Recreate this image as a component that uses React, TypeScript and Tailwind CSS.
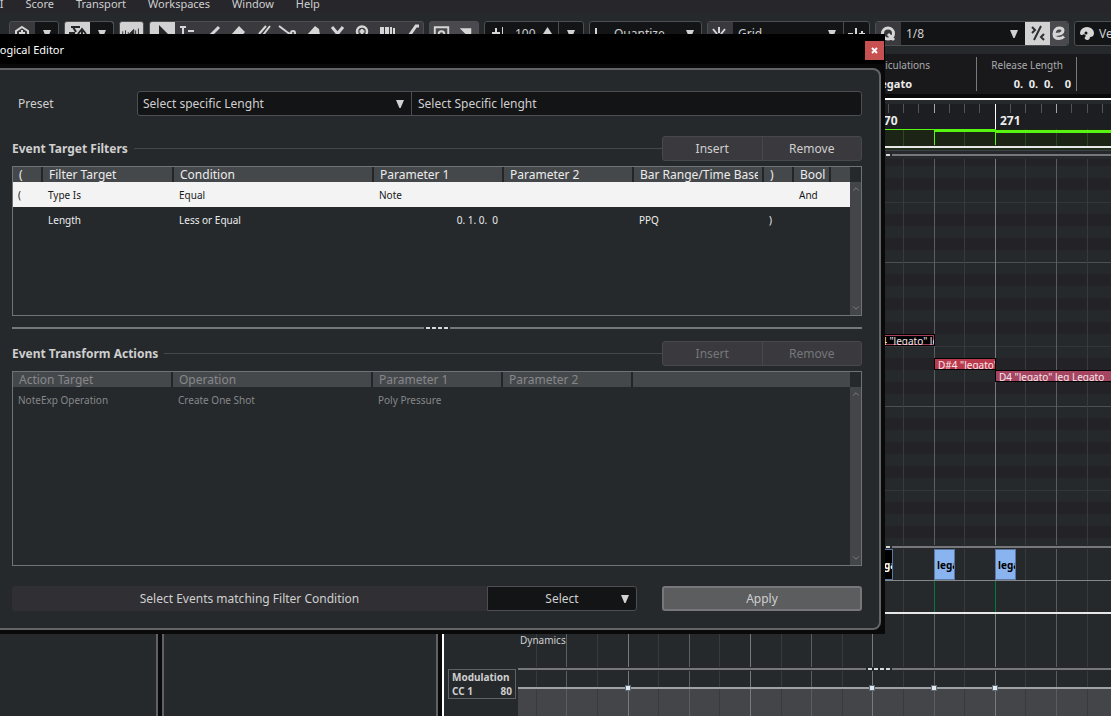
import React from 'react';
import { ChevronDown, ChevronUp } from 'lucide-react';

interface Column {
    label: string;
    width: string;
}

interface GridNote {
    label: string;
    left: number;
    top: number;
    width: number;
    tone: string;
}

const MENUS = ['MIDI', 'Score', 'Transport', 'Workspaces', 'Window', 'Help'];

const FILTER_COLUMNS: Column[] = [
    { label: '(', width: 'w-[30px]' },
    { label: 'Filter Target', width: 'w-[131px]' },
    { label: 'Condition', width: 'w-[200px]' },
    { label: 'Parameter 1', width: 'w-[130px]' },
    { label: 'Parameter 2', width: 'w-[130px]' },
    { label: 'Bar Range/Time Base', width: 'w-[130px]' },
    { label: ')', width: 'w-[30px]' },
    { label: 'Bool', width: 'w-[37px]' },
    { label: '', width: '' },
];

const FILTER_ROWS = [
    ['(', 'Type Is', 'Equal', 'Note', '', '', '', 'And', ''],
    ['', 'Length', 'Less or Equal', '0. 1. 0.  0', '', 'PPQ', ')', '', ''],
];

const ACTION_COLUMNS: Column[] = [
    { label: 'Action Target', width: 'w-[160px]' },
    { label: 'Operation', width: 'w-[200px]' },
    { label: 'Parameter 1', width: 'w-[130px]' },
    { label: 'Parameter 2', width: 'w-[130px]' },
    { label: '', width: '' },
];

const ACTION_ROWS = [['NoteExp Operation', 'Create One Shot', 'Poly Pressure', '', '']];

const NOTES: GridNote[] = [
    { label: 'F4 "legato" leg', left: 354, top: 175, width: 63, tone: 'bg-black inset-ring inset-ring-[#a33f5b]' },
    { label: 'D#4 "legato" leg', left: 416, top: 199, width: 62, tone: 'bg-[#bb394d]' },
    { label: 'D4 "legato" leg Legato', left: 477, top: 211, width: 180, tone: 'bg-[#a64562]' },
];

const ARTICULATIONS = [
    { left: 354, tone: 'bg-black text-white' },
    { left: 416, tone: 'bg-[#89b4f0] text-black' },
    { left: 477, tone: 'bg-[#89b4f0] text-black' },
];

const CC_POINTS = [110, 354, 416, 477];

// Grid steps are an eighth apart, every fourth one is a bar
const STEPS = Array.from({ length: 90 }, (_, i) => {
    const step = i - 3;
    return { x: 110 + Math.floor(step * 30.6), bar: step % 4 === 0, beat: step % 2 === 0 };
});

const TICKS = Array.from({ length: 180 }, (_, i) => {
    const tick = i - 6;
    return { x: 110 + Math.floor(tick * 15.3), bar: tick % 8 === 0, beat: tick % 4 === 0 };
});

const GridLines = () => (
    <svg className="absolute inset-0 h-full w-full" aria-hidden="true">
        {STEPS.map(({ x, bar, beat }) => (
            <rect key={x} x={x} width="1" height="100%" fill={bar ? '#77797c' : beat ? '#5b5e60' : '#383b3e'} />
        ))}
    </svg>
);

const KeyRows = () => (
    <svg className="absolute inset-0 h-full w-full" aria-hidden="true">
        <defs>
            <pattern id="octave" y="103" width="100" height="144" patternUnits="userSpaceOnUse">
                <rect width="100" height="144" fill="#25292c" />
                {[12, 36, 60, 96, 120].map((y) => (
                    <rect key={y} y={y} width="100" height="12" fill="#232327" />
                ))}
                <rect width="100" height="1" fill="#4d5053" />
                <rect y="84" width="100" height="1" fill="#34373a" />
            </pattern>
        </defs>
        <rect width="100%" height="100%" fill="url(#octave)" />
    </svg>
);

const Grip = () => (
    <div className="flex h-0.5 gap-0.5">
        <span className="flex-1 bg-[#77777b]" />
        {[0, 1, 2, 3].map((i) => (
            <span key={i} className="w-1 bg-[#d8d8d8]" />
        ))}
        <span className="flex-1 bg-[#77777b]" />
    </div>
);

// Lane divider whose grip sits at a fixed place along the time line
const LaneDivider = () => (
    <div className="flex h-0.5 gap-0.5">
        <span className="w-[348px] bg-[#77777b]" />
        {[0, 1, 2, 3].map((i) => (
            <span key={i} className="w-1 bg-[#d8d8d8]" />
        ))}
        <span className="flex-1 bg-[#77777b]" />
    </div>
);

const Triangle = ({ className = '' }: { className?: string }) => (
    <svg className={className} width="8" height="8" viewBox="0 0 8 8" fill="#d2d2d2" aria-hidden="true">
        <path d="M0 0h8L4.600 8H3.400z" />
    </svg>
);

const SelectBox = ({ label, value, className }: { label: string; value: string; className: string }) => (
    <div className={`relative flex ${className}`}>
        <select aria-label={label} className="w-full appearance-none bg-transparent pr-6 pl-[5px] text-[#cfcfcf] outline-none">
            <option>{value}</option>
        </select>
        <Triangle className="pointer-events-none absolute top-2 right-[7px]" />
    </div>
);

const ToolIcon = ({ children }: { children: React.ReactNode }) => (
    <svg width="25" height="25" viewBox="0 0 25 25" fill="none" stroke="#d6d6d6" strokeWidth="2" aria-hidden="true">
        {children}
    </svg>
);

const TOOLS = [
    { name: 'Object Selection', icon: <path d="M9 4l10 10H15l2 6-3 1-2-6-3 3z" fill="#25262a" stroke="none" /> },
    { name: 'Range', icon: <path d="M5 6h6M8 6v15M5 21h6M13 10h6M13 14h6" /> },
    { name: 'Draw', icon: <path d="M19 6L9 16l-3 4" strokeWidth="3" /> },
    { name: 'Erase', icon: <path d="M6 14l8-9 6 6-8 9z" fill="#d6d6d6" stroke="none" /> },
    { name: 'Trim', icon: <path d="M20 5L10 18M16 5l-7 8" /> },
    { name: 'Split', icon: <path d="M4 5l8 6 3 2M20 12a2 2 0 1 1-4 0 2 2 0 1 1 4 0M15 12L6 19" /> },
    { name: 'Glue', icon: <path d="M15 5l4 3 1 6H7z" fill="#d6d6d6" stroke="none" /> },
    { name: 'Mute', icon: <path d="M7 6l10 12M18 6L8 18" strokeWidth="3" /> },
    { name: 'Zoom', icon: <path d="M17 10.500a5 5 0 1 1-10 0 5 5 0 1 1 10 0M12 8v5M9.500 10.500h5M15 15l5 5" strokeWidth="2.500" /> },
    {
        name: 'Time Warp',
        icon: <path d="M5 6h4v14H5zM10 6h4v14h-4zM15 6h2v14h-2zM18 7h2v13h-2z" fill="#d6d6d6" stroke="none" />,
    },
    { name: 'Line', icon: <path d="M19 5h-3L9 15l-5 4" strokeWidth="3" /> },
];

const groupStyle = 'flex h-[25px] shrink-0 overflow-hidden rounded-[3px] border border-[#4c4e52]';

const Toolbar = () => (
    <div className="flex gap-[5px] overflow-hidden pt-[7px] pb-2 pl-[9px]">
        <div className={`${groupStyle} w-[50px] bg-[#3a3a3e]`}>
            <button type="button" aria-label="Setup" className="-mt-px w-[25px]">
                <ToolIcon>
                    <path d="M12 6l6 4v7l-6 4-6-4v-7zM12 9v7M9 12h6" />
                </ToolIcon>
            </button>
            <button type="button" aria-label="Setup options" className="flex flex-1 justify-center bg-[#131416] pt-2">
                <Triangle />
            </button>
        </div>
        <div className={`${groupStyle} w-[50px] bg-[#d2d2d2]`}>
            <button type="button" aria-label="Auto-scroll" className="-mt-px w-[25px]">
                <ToolIcon>
                    <path d="M6 6h9M4 12h6M17 8v13M13 13l4-5 4 5M8 6l3 5" stroke="#25262a" />
                </ToolIcon>
            </button>
            <button type="button" aria-label="Auto-scroll options" className="flex flex-1 justify-center bg-[#131416] pt-2">
                <Triangle />
            </button>
        </div>
        <button type="button" aria-label="Acoustic feedback" className={`${groupStyle} w-[25px] bg-[#d2d2d2]`}>
            <ToolIcon>
                <path d="M3 9v7M6 8v10M9 10v5M20 6v14M17 8v10M10 12l5-5v12z" stroke="#25262a" strokeWidth="1" fill="#25262a" />
            </ToolIcon>
        </button>
        <div className={`${groupStyle} w-[275px] bg-[#3a3a3e]`}>
            {TOOLS.map(({ name, icon }, i) => (
                <button key={name} type="button" aria-label={name} className={`-mt-px w-[25px] shrink-0 ${i === 0 ? 'bg-[#d2d2d2]' : ''}`}>
                    <ToolIcon>{icon}</ToolIcon>
                </button>
            ))}
        </div>
        <div className={`${groupStyle} w-[50px] bg-[#4a4a4e]`}>
            <svg className="-mt-px" width="50" height="25" viewBox="0 0 50 25" fill="none" stroke="#d6d6d6" strokeWidth="2" aria-hidden="true">
                <path d="M5 20V6h14v14M9 13a3 3 0 1 1 4 3" />
                <path d="M31 7h12v12z" fill="#d6d6d6" stroke="none" />
            </svg>
        </div>
        <div className={`${groupStyle} w-[100px] bg-[#131416] text-[#cfcfcf]`}>
            <svg width="20" height="25" viewBox="0 0 20 25" fill="none" stroke="#d6d6d6" aria-hidden="true">
                <path d="M11 6v8M7 11h8" strokeWidth="2" />
                <path d="M17.500 5v15" />
            </svg>
            <span className="flex-1 pl-2.5 leading-6">100</span>
            <svg className="mr-1.5" width="9" height="20" viewBox="0 0 9 20" fill="#d2d2d2" aria-hidden="true">
                <path d="M4.500 5L9 12H0z" />
            </svg>
            <button type="button" aria-label="Velocity options" className="flex w-[25px] justify-center border-l border-[#4c4e52] pt-2">
                <Triangle />
            </button>
        </div>
        <div className={`${groupStyle} w-[113px] bg-[#131416] text-[#cfcfcf]`}>
            <svg width="16" height="25" viewBox="0 0 16 25" stroke="#d6d6d6" strokeWidth="2" fill="none" aria-hidden="true">
                <path d="M6 6v11h8" />
            </svg>
            <span className="flex-1 pl-2 leading-6">Quantize</span>
            <Triangle className="mt-2 mr-[7px]" />
        </div>
        <div className={`${groupStyle} w-[163px] bg-[#131416]`}>
            <span className="w-[25px] bg-[#3a3a3e]">
                <ToolIcon>
                    <path d="M11 5v6M5 7l4 5M17 7l-4 5M5 18l4-4M17 18l-4-4" />
                </ToolIcon>
            </span>
            <SelectBox label="Grid type" value="Grid" className="flex-1 border-r border-[#4c4e52]" />
            <span className="w-[25px]">
                <ToolIcon>
                    <path d="M4 12h5M12 6v12M15 12h6M18 9v6" />
                </ToolIcon>
            </span>
        </div>
        <div className={`${groupStyle} w-[194px] bg-[#131416]`}>
            <button type="button" aria-label="Apply quantize" className="-mt-px w-[25px] bg-[#3a3a3e]">
                <svg width="25" height="25" viewBox="0 0 25 25" fill="none" stroke="#d6d6d6" strokeWidth="3" aria-hidden="true">
                    <path d="M12 18a5.500 5.500 0 1 1 5.500-5.500c0 2-1.500 5.500-5.500 5.500zM12 13l6 6" />
                </svg>
            </button>
            <SelectBox label="Quantize preset" value="1/8" className="flex-1" />
            <button type="button" aria-label="Quantize panel" className="-my-px w-[25px] bg-[#d2d2d2]">
                <svg width="25" height="25" viewBox="0 0 25 25" fill="none" stroke="#2d2e32" strokeWidth="2" aria-hidden="true">
                    <path d="M16 5L9 19M7 6l3 3-3 3M19 13l-3 3 3 3" />
                </svg>
            </button>
            <button type="button" aria-label="Open quantize" className="w-[18px] bg-[#4a4a4e]">
                <svg width="18" height="23" viewBox="0 0 18 23" fill="none" stroke="#d6d6d6" strokeWidth="3" aria-hidden="true">
                    <path d="M4 12.500c4 0 9-1 9-4 0-2-2-2.500-4-2.500-3 0-5 3-5 6 0 3 2 4.500 5 4.500 2 0 4-1 5-2" />
                </svg>
            </button>
        </div>
        <div className={`${groupStyle} w-[140px] bg-[#131416] text-[#cfcfcf]`}>
            <svg width="24" height="23" viewBox="0 0 24 23" aria-hidden="true">
                <path d="M5 11a7 6 0 0 1 14 0c0 3-2 4-4 4 0 3-3 4-5 2-1-1 0-2 1-3l-2-2c-2 2-4 1-4-1z" fill="#d6d6d6" />
                <circle cx="11" cy="11" r="1.500" fill="#131416" />
            </svg>
            <span className="leading-6">Velocity</span>
        </div>
    </div>
);

const DataGrid = ({ columns, rows, disabled = false, height }: { columns: Column[]; rows: string[][]; disabled?: boolean; height: string }) => (
    <div className={`flex border border-[#6f7276] ${height}`}>
        <div className="min-w-0 flex-1">
            <table className="w-full table-fixed border-separate border-spacing-0 text-left">
                <thead>
                    <tr className="h-[15px] bg-[#45484b]">
                        {columns.map(({ label, width }, i) => (
                            <th
                                key={i}
                                className={`p-0 pr-1 font-normal ${width} ${disabled ? 'text-[#85878a]' : 'text-[#ececec]'} ${i < columns.length - 1 ? 'border-r-2 border-[#232629]' : ''}`}
                            >
                                <div className="h-[15px] overflow-hidden pl-1.5 leading-4 whitespace-nowrap">{label}</div>
                            </th>
                        ))}
                    </tr>
                </thead>
                <tbody className="text-[10px]">
                    {rows.map((row, r) => (
                        <tr key={r} className={`h-[25px] ${disabled ? 'text-[#85878a]' : r === 0 ? 'bg-[#f3f3f3] text-[#18181a]' : 'text-[#ececec]'}`}>
                            {row.map((cell, c) => (
                                <td key={c} className={`p-0 whitespace-pre ${cell.startsWith('0.') ? 'pr-1.5 text-right' : 'pl-[5px]'}`}>
                                    {cell}
                                </td>
                            ))}
                        </tr>
                    ))}
                </tbody>
            </table>
        </div>
        <div className="mt-[15px] flex w-[11px] flex-col items-center justify-between bg-[#434548] py-0.5 text-[#85878a]">
            <ChevronUp size={10} />
            <ChevronDown size={10} />
        </div>
    </div>
);

const SectionHeader = ({ title, disabled = false }: { title: string; disabled?: boolean }) => (
    <div className="flex h-[25px] items-center">
        <h2 className="font-bold text-[#cfcfcf]">{title}</h2>
        <span className="ml-1.5 h-px flex-1 bg-[#45484b]" />
        <div className="flex h-full w-[200px] overflow-hidden rounded-[3px] border border-[#48484c] bg-[#3a3a3e]">
            {['Insert', 'Remove'].map((label) => (
                <button
                    key={label}
                    type="button"
                    disabled={disabled}
                    className={`flex-1 border-[#48484c] not-last:border-r ${disabled ? 'text-[#75777a]' : 'text-[#cfcfcf]'}`}
                >
                    {label}
                </button>
            ))}
        </div>
    </div>
);

const LogicalEditor = () => (
    <section role="dialog" aria-label="Logical Editor" className="absolute top-[34px] left-0 w-[885px] bg-[#090909] pr-1 pb-1">
        <header className="-mr-1 mb-1 flex h-[30px] items-center justify-between bg-black pt-0.5 pr-px">
            <h1 className="-ml-1.5 text-[11px] text-white">Logical Editor</h1>
            <button type="button" aria-label="Close" className="flex h-[19px] w-[19px] items-center justify-center bg-[#c75050]">
                <svg width="7" height="7" viewBox="0 0 7 7" stroke="#fff" strokeWidth="2" aria-hidden="true">
                    <path d="M1 1l5 5M6 1L1 6" />
                </svg>
            </button>
        </header>
        <div className="rounded-r-lg border-2 border-l-0 border-[#626467] bg-[#25292c] pt-[21px] pr-[17px] pb-[17px] pl-3">
            <div className="flex h-[25px] items-center text-[#cfcfcf]">
                <label htmlFor="preset-name" className="w-[125px] pl-1.5">
                    Preset
                </label>
                <div className="flex h-full flex-1 rounded-[3px] border border-[#4c4e52] bg-[#131416]">
                    <SelectBox label="Preset" value="Select specific Lenght" className="w-[274px] border-r border-[#4c4e52]" />
                    <input id="preset-name" defaultValue="Select Specific lenght" className="min-w-0 flex-1 bg-transparent pl-1.5 outline-none" />
                </div>
            </div>

            <div className="mt-5">
                <SectionHeader title="Event Target Filters" />
            </div>
            <div className="mt-[5px]">
                <DataGrid columns={FILTER_COLUMNS} rows={FILTER_ROWS} height="h-[150px]" />
            </div>

            <div className="mt-[11px] mb-3">
                <Grip />
            </div>

            <SectionHeader title="Event Transform Actions" disabled />
            <div className="mt-[5px]">
                <DataGrid columns={ACTION_COLUMNS} rows={ACTION_ROWS} disabled height="h-[195px]" />
            </div>

            <div className="mt-5 flex h-[25px] text-[#cfcfcf]">
                <label htmlFor="function" className="flex-1 rounded-l-[3px] bg-[#303034] text-center leading-[25px]">
                    Select Events matching Filter Condition
                </label>
                <div className="relative flex w-[150px] rounded-r-[3px] border border-[#4c4e52] bg-[#131416]">
                    <select id="function" className="w-full appearance-none bg-transparent text-center outline-none">
                        <option>Select</option>
                    </select>
                    <Triangle className="pointer-events-none absolute top-2 right-[7px]" />
                </div>
                <button type="button" className="ml-[25px] w-[200px] rounded-[3px] border-2 border-[#77777b] bg-[#5c5d5f]">
                    Apply
                </button>
            </div>
        </div>
    </section>
);

const KeyEditor = () => (
    <main className="flex min-w-0 flex-1 flex-col border-t-2 border-l-2 border-white bg-[#25292c] pt-1">
        {/* Ruler */}
        <div className="relative ml-[74px] h-[25px] overflow-hidden bg-[#1d1e22]">
            <svg className="absolute inset-0 h-full w-full" aria-hidden="true">
                {TICKS.map(({ x, bar, beat }) => (
                    <rect key={x} x={x} width="1" height={bar ? 25 : 9} fill={bar ? '#ffffff' : beat ? '#a5a6a8' : '#515356'} />
                ))}
            </svg>
            <span className="absolute top-[9px] left-[359px] text-[12px] font-bold text-[#ececec]">270</span>
            <span className="absolute top-[9px] left-[482px] text-[12px] font-bold text-[#ececec]">271</span>
        </div>
        {/* Controller curve */}
        <div className="relative ml-[74px] h-[17px] overflow-hidden bg-[#1c2515]">
            <svg className="absolute inset-0 h-full w-full" aria-hidden="true">
                {STEPS.map(({ x }) => (
                    <rect key={x} x={x} width="1" height="100%" fill="#2c4722" />
                ))}
                <g fill="#58f512">
                    <rect width="416" height="1" />
                    <rect x="416" width="61" height="3" />
                    <rect x="477" y="1" width="100%" height="3" />
                    <rect x="416" width="1" height="16" />
                    <rect x="477" width="1" height="16" />
                </g>
            </svg>
        </div>
        <div className="h-0.5 bg-[#e8e8e8]" />
        <div className="h-[3px] border-b border-[#3f4246] bg-[#20301c]" />
        <div className="mt-[3px] mb-[3px] ml-[74px]">
            <LaneDivider />
        </div>
        {/* Notes */}
        <div className="flex h-[386px]">
            <div className="w-[74px] bg-[#1d1e22]" />
            <div className="relative flex-1 overflow-hidden">
                <KeyRows />
                <GridLines />
                {NOTES.map(({ label, left, top, width, tone }) => (
                    <div
                        key={label}
                        style={{ left, top, width }}
                        className={`absolute h-3 overflow-hidden border border-black pl-[3px] text-[10px] leading-3 whitespace-nowrap text-[#f3e6ea] ${tone}`}
                    >
                        {label}
                    </div>
                ))}
            </div>
        </div>
        <div className="mt-px mb-px ml-[74px]">
            <LaneDivider />
        </div>
        {/* Articulations */}
        <div className="relative ml-[74px] h-[63px] overflow-hidden">
            <GridLines />
            <div className="absolute top-[31px] h-px w-full bg-[#85878a]" />
            {ARTICULATIONS.map(({ left, tone }) => (
                <React.Fragment key={left}>
                    <div style={{ left }} className="absolute top-8 h-8 w-px bg-[#007a3d]" />
                    <div style={{ left }} className={`absolute top-0 h-[31px] w-[21px] overflow-hidden border border-[#5878a3] pl-0.5 text-[10px] leading-[30px] font-bold ${tone}`}>
                        legato
                    </div>
                </React.Fragment>
            ))}
        </div>
        <div className="h-0.5 bg-[#e8e8e8]" />
        {/* Dynamics */}
        <div className="relative ml-[74px] h-[53px] overflow-hidden">
            <GridLines />
            <span className="absolute top-[18px] left-0.5 text-[10px] text-[#cfcfcf]">Dynamics</span>
        </div>
        {/* Modulation */}
        <div className="flex min-h-12 flex-1">
            <div className="w-[74px] px-0.5 pt-0.5 pl-1">
                <div className="border border-[#5f6164] px-[3px] text-[10px] leading-[14px] font-bold text-[#cfcfcf]">
                    <p>Modulation</p>
                    <p className="flex justify-between">
                        <span>CC 1</span>
                        <span>80</span>
                    </p>
                </div>
            </div>
            <div className="flex min-w-0 flex-1 flex-col pt-px">
                <LaneDivider />
                <div className="relative mt-px flex-1 overflow-hidden">
                    <div className="absolute inset-x-0 top-4 bottom-0 bg-[#434548]" />
                    <GridLines />
                    <div className="absolute inset-x-0 top-4 h-0.5 bg-[#a0a1a4]" />
                    {CC_POINTS.map((left) => (
                        <span key={left} style={{ left }} className="absolute top-3.5 -ml-[3px] h-1.5 w-1.5 border border-[#5d6a7a] bg-[#e3e8ee]" />
                    ))}
                </div>
            </div>
        </div>
    </main>
);

const App = () => {
    return (
        <div className="relative flex min-h-screen w-full flex-col overflow-hidden bg-[#090909] font-['Noto_Sans',sans-serif] text-[12px] leading-4">
            <div className="bg-[#25292c]">
                <nav className="flex h-3.5 gap-[22px] bg-[#26262b] text-[11px] text-[#cfcfcf]">
                    {MENUS.map((menu) => (
                        <a key={menu} href="#" className="-mt-1 first:-ml-[22px]">
                            {menu}
                        </a>
                    ))}
                </nav>
                <Toolbar />
            </div>

            {/* Info line */}
            <div className="flex h-10 overflow-hidden bg-[#19191c] py-[3px]">
                <div className="w-[861px] shrink-0" />
                <dl className="w-[116px] shrink-0 border-r border-[#77797c] pl-2.5">
                    <dt className="text-[10px] text-[#a9aaac]">Articulations</dt>
                    <dd className="mt-[3px] pl-1.5 text-[11px] font-bold text-[#ececec]">legato</dd>
                </dl>
                <dl className="w-[100px] shrink-0 border-r border-[#77797c] pr-[5px] text-right">
                    <dt className="pr-2 text-[10px] text-[#a9aaac]">Release Length</dt>
                    <dd className="mt-[3px] text-[11px] font-bold whitespace-pre text-[#ececec]">0.  0.  0.    0</dd>
                </dl>
            </div>

            <div className="mt-1 flex flex-1 gap-1">
                <aside className="w-[158px] border-r-2 border-[#5f6164] bg-[#25292c]" />
                <aside className="w-[276px] border-x-2 border-[#5f6164] bg-[#25292c]" />
                <KeyEditor />
            </div>

            <LogicalEditor />
        </div>
    );
};

export default App;
